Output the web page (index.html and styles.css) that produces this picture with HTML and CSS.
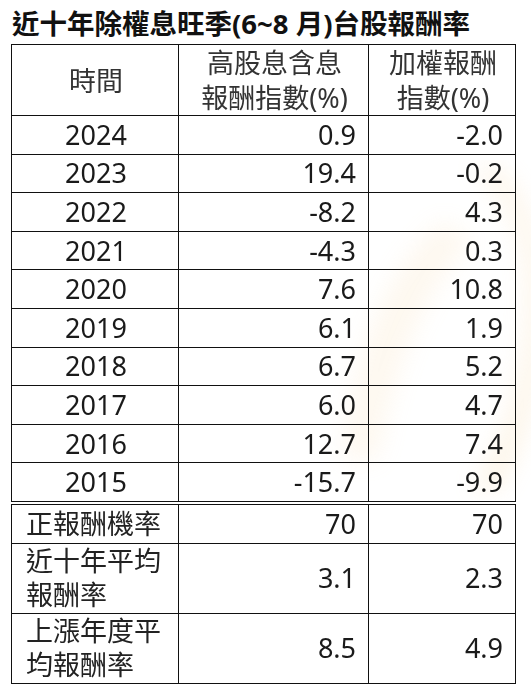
FILE: index.html
```html
<!DOCTYPE html>
<html lang="zh-Hant">
<head>
    <meta charset="UTF-8">
    <meta name="viewport" content="width=device-width, initial-scale=1.0">
    <title>近十年除權息旺季台股報酬率</title>
    <link rel="stylesheet" href="styles.css">
</head>
<body>
    <div class="page">
        <h1 class="title">近十年除權息旺季(6~8 月)台股報酬率</h1>
        <table class="report">
            <colgroup>
                <col class="c-year">
                <col class="c-high">
                <col class="c-taiex">
            </colgroup>
            <thead>
                <tr>
                    <th>時間</th>
                    <th>高股息含息<br>報酬指數(%)</th>
                    <th>加權報酬<br>指數(%)</th>
                </tr>
            </thead>
            <tbody>
                <tr><td>2024</td><td>0.9</td><td>-2.0</td></tr>
                <tr><td>2023</td><td>19.4</td><td>-0.2</td></tr>
                <tr><td>2022</td><td>-8.2</td><td>4.3</td></tr>
                <tr><td>2021</td><td>-4.3</td><td>0.3</td></tr>
                <tr><td>2020</td><td>7.6</td><td>10.8</td></tr>
                <tr><td>2019</td><td>6.1</td><td>1.9</td></tr>
                <tr><td>2018</td><td>6.7</td><td>5.2</td></tr>
                <tr><td>2017</td><td>6.0</td><td>4.7</td></tr>
                <tr><td>2016</td><td>12.7</td><td>7.4</td></tr>
                <tr class="last-year"><td>2015</td><td>-15.7</td><td>-9.9</td></tr>
            </tbody>
            <tbody class="summary">
                <tr><td>正報酬機率</td><td>70</td><td>70</td></tr>
                <tr class="tall"><td>近十年平均<br>報酬率</td><td>3.1</td><td>2.3</td></tr>
                <tr class="tall"><td>上漲年度平<br>均報酬率</td><td>8.5</td><td>4.9</td></tr>
            </tbody>
        </table>
        <svg class="watermark" width="230" height="340" viewBox="0 0 230 340">
            <defs>
                <filter id="soft"><feGaussianBlur stdDeviation="12"/></filter>
            </defs>
            <g filter="url(#soft)" fill="#f8d9a8">
                <path d="M160 10 C 210 40, 225 120, 210 200 C 200 260, 180 300, 160 330 L 185 330 C 215 280, 235 200, 230 120 C 225 60, 200 20, 180 5 Z"/>
                <path d="M130 60 C 70 110, 40 200, 30 300 L 65 300 C 80 210, 110 130, 160 80 Z" opacity="0.6"/>
            </g>
        </svg>
    </div>
</body>
</html>
```

FILE: styles.css
```css
body {
    margin: 0;
    background: #ffffff;
    color: #1a1a1a;
    font-family: "Noto Sans", "Noto Sans CJK TC", sans-serif;
}

.page {
    position: relative;
    width: 531px;
    height: 696px;
    padding: 0 0 0 11px;
    box-sizing: border-box;
    overflow: hidden;
}

.title {
    margin: 0;
    padding: 9px 0 0 1px;
    height: 35px;
    box-sizing: border-box;
    font-size: 27.5px;
    line-height: 30px;
    font-weight: bold;
    color: #111;
    white-space: nowrap;
}

.report {
    position: relative;
    z-index: 1;
    width: 504px;
    border-collapse: collapse;
    table-layout: fixed;
    font-size: 27px;
    margin-top: 9px;
}

.c-year { width: 167px; }
.c-high { width: 190px; }
.c-taiex { width: 147px; }

.report th,
.report td {
    border: 1px solid #111;
    border-left-color: #8a8a8a;
    padding: 0 12px 0 14px;
    font-weight: normal;
    white-space: nowrap;
}

.report th:first-child,
.report td:first-child {
    border-left-color: #111;
}

.report th:last-child,
.report td:last-child {
    border-right-color: #111;
}

.report th {
    height: 69px;
    line-height: 35px;
    text-align: center;
    color: #333;
}

.report tbody td {
    height: 37.6px;
    line-height: 32px;
    text-align: right;
}

.report tbody td:first-child {
    text-align: center;
}

.report .last-year td {
    border-bottom: 4px double #111;
}

.report .summary td:first-child {
    text-align: left;
    line-height: 34px;
    color: #222;
}

.report .summary tr.tall td {
    height: 69px;
}

.watermark {
    position: absolute;
    right: -12px;
    top: 160px;
    z-index: 0;
    opacity: 0.3;
    pointer-events: none;
}
```
